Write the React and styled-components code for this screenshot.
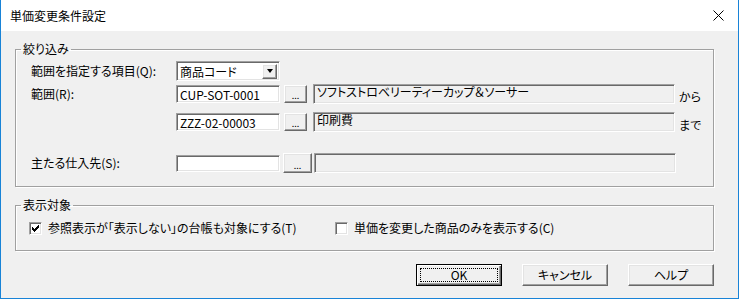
import React from 'react'
import styled, { createGlobalStyle } from 'styled-components'

const GlobalStyle = createGlobalStyle`
  * { box-sizing: border-box; }
  body {
    margin: 0;
    background: #ffffff;
    font-family: "Noto Sans CJK JP", "Liberation Sans", sans-serif;
    font-size: 12px;
    color: #000;
  }
`

const Window = styled.div`
  width: 739px;
  height: 299px;
  display: flex;
  flex-direction: column;
  border: 1px solid #1883d7;
  border-top: none;
  background: #f0f0f0;
  font-feature-settings: "palt";
`

const TitleBar = styled.div`
  height: 31px;
  flex: none;
  display: flex;
  align-items: center;
  justify-content: space-between;
  background: #fff;
  padding: 0 14px 0 9px;
`

const Title = styled.span`
  font-size: 12px;
  line-height: 14px;
`

const Body = styled.div`
  flex: 1;
  padding: 11px 0 0 14px;
  display: flex;
  flex-direction: column;
`

const Group = styled.fieldset`
  width: 699px;
  height: ${({ $h }) => $h}px;
  margin: ${({ $top }) => $top || 0}px 0 0 0;
  padding: 0;
  border: 1px solid #a0a0a0;
  box-shadow: 1px 1px 0 #fff, inset 1px 1px 0 #fff;
  display: flex;
  flex-direction: column;
`

const Legend = styled.legend`
  margin-left: 5px;
  padding: 0 2px;
  line-height: 14px;
`

const Row = styled.div`
  display: flex;
  align-items: center;
  height: 20px;
  margin-top: ${({ $mt }) => $mt}px;
  padding-left: 15px;
`

const Label = styled.span`
  width: 145px;
  flex: none;
  line-height: 14px;
`

const sunken = `
  border: 1px solid;
  border-color: #a0a0a0 #ffffff #ffffff #a0a0a0;
  box-shadow: inset 1px 1px 0 #696969, inset -1px -1px 0 #e3e3e3;
`

const raised = `
  border: 1px solid;
  border-color: #ffffff #696969 #696969 #ffffff;
  box-shadow: inset -1px -1px 0 #a0a0a0, inset 1px 1px 0 #e3e3e3;
  background: #f0f0f0;
`

const TextBox = styled.div`
  ${sunken}
  width: 104px;
  height: ${({ $h }) => $h || 18}px;
  background: #fff;
  padding: 1px 0 0 3px;
  line-height: 15px;
  white-space: nowrap;
  flex: none;
`

const Combo = styled.div`
  ${sunken}
  width: 104px;
  height: 20px;
  background: #fff;
  display: flex;
  align-items: center;
  justify-content: space-between;
  padding: 0 2px 0 3px;
  flex: none;
`

const DropButton = styled.div`
  ${raised}
  width: 15px;
  height: 15px;
  display: flex;
  align-items: center;
  justify-content: center;
`

const Arrow = styled.span`
  width: 0;
  height: 0;
  border-left: 3.5px solid transparent;
  border-right: 3.5px solid transparent;
  border-top: 4px solid #000;
`

const BrowseButton = styled.div`
  ${raised}
  width: ${({ $w }) => $w || 23}px;
  height: ${({ $h }) => $h || 18}px;
  margin-left: ${({ $ml }) => $ml || 4}px;
  flex: none;
  display: flex;
  justify-content: center;
  align-items: flex-end;
  padding-bottom: 2px;
  font-size: 9px;
  line-height: 9px;
  letter-spacing: 0;
`

const Display = styled.div`
  ${sunken}
  width: 362px;
  height: 20px;
  margin-left: ${({ $ml }) => $ml || 6}px;
  background: #f0f0f0;
  padding: 0 0 0 3px;
  line-height: 14px;
  white-space: nowrap;
  flex: none;
`

const Suffix = styled.span`
  margin-left: 4px;
  margin-top: ${({ $mt }) => $mt || 0}px;
  line-height: 14px;
`

const CheckRow = styled.div`
  display: flex;
  align-items: center;
  height: 14px;
  margin-top: 9px;
  padding-left: 13px;
`

const CheckItem = styled.label`
  display: flex;
  align-items: center;
  gap: 6px;
  width: ${({ $w }) => $w}px;
  line-height: 14px;
`

const Box = styled.span`
  ${sunken}
  width: 13px;
  height: 13px;
  background: #fff;
  display: flex;
  align-items: center;
  justify-content: center;
  flex: none;
`

const Buttons = styled.div`
  display: flex;
  margin: 13px 0 0 401px;
  gap: 20px;
`

const PushButton = styled.div`
  ${raised}
  width: 86px;
  height: 22px;
  display: flex;
  align-items: center;
  justify-content: center;
  line-height: 14px;
  ${({ $default }) => $default && `
    border-color: #000;
    box-shadow: inset 1px 1px 0 #fff, inset -1px -1px 0 #696969, inset -2px -2px 0 #a0a0a0;
  `}
`

const Focus = styled.span`
  flex: 1;
  align-self: stretch;
  margin: 3px;
  border: 1px dotted #000;
  display: flex;
  align-items: center;
  justify-content: center;
`

function Check({ checked }) {
  return (
    <Box>
      {checked && (
        <svg width="9" height="9" viewBox="0 0 9 9" shapeRendering="crispEdges">
          <path d="M1 3 H2 V4 H3 V5 H4 V4 H5 V3 H6 V2 H7 V1 H8 V4 H7 V5 H6 V6 H5 V7 H4 V8 H3 V7 H2 V6 H1 Z" fill="#000" />
        </svg>
      )}
    </Box>
  )
}

export default function App() {
  return (
    <>
      <GlobalStyle />
      <Window>
        <TitleBar>
          <Title>単価変更条件設定</Title>
          <svg width="11" height="11" viewBox="0 0 11 11">
            <path d="M0.5 0.5 L10.5 10.5 M10.5 0.5 L0.5 10.5" stroke="#000" strokeWidth="1" />
          </svg>
        </TitleBar>
        <Body>
          <Group $h={145}>
            <Legend>絞り込み</Legend>
            <Row $mt={5}>
              <Label>範囲を指定する項目(Q):</Label>
              <Combo>
                <span>商品コード</span>
                <DropButton><Arrow /></DropButton>
              </Combo>
            </Row>
            <Row $mt={3}>
              <Label>範囲(R):</Label>
              <TextBox>CUP-SOT-0001</TextBox>
              <BrowseButton>...</BrowseButton>
              <Display>ソフトストロベリーティーカップ＆ソーサー</Display>
              <Suffix $mt={6}>から</Suffix>
            </Row>
            <Row $mt={8}>
              <Label />
              <TextBox>ZZZ-02-00003</TextBox>
              <BrowseButton>...</BrowseButton>
              <Display>印刷費</Display>
              <Suffix $mt={6}>まで</Suffix>
            </Row>
            <Row $mt={21}>
              <Label>主たる仕入先(S):</Label>
              <TextBox $h={17} />
              <BrowseButton $w={29} $h={20} $ml={3}>...</BrowseButton>
              <Display $ml={2} />
            </Row>
          </Group>
          <Group $h={53} $top={11}>
            <Legend>表示対象</Legend>
            <CheckRow>
              <CheckItem $w={306}>
                <Check checked />
                参照表示が「表示しない」の台帳も対象にする(T)
              </CheckItem>
              <CheckItem $w={360}>
                <Check />
                単価を変更した商品のみを表示する(C)
              </CheckItem>
            </CheckRow>
          </Group>
          <Buttons>
            <PushButton $default><Focus>OK</Focus></PushButton>
            <PushButton>キャンセル</PushButton>
            <PushButton>ヘルプ</PushButton>
          </Buttons>
        </Body>
      </Window>
    </>
  )
}
